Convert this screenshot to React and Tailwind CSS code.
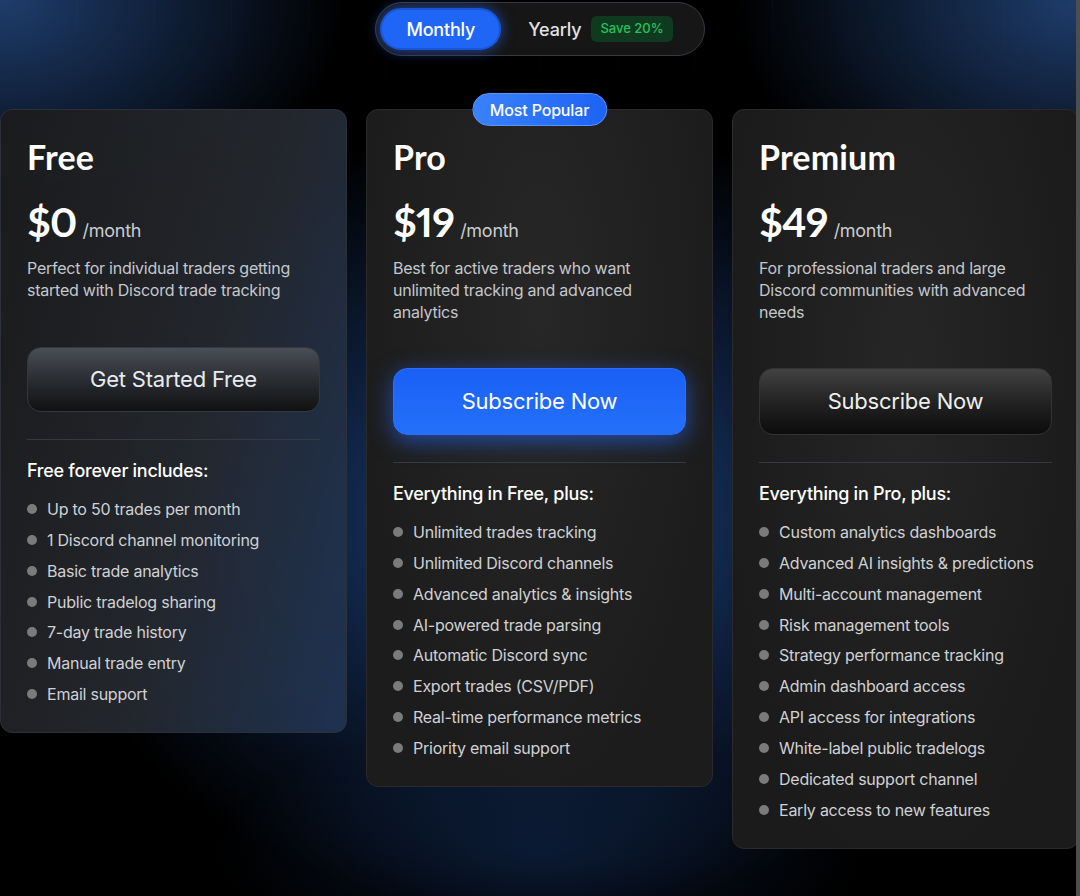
import { useState } from "react";

const plans = [
  {
    name: "Free",
    price: "$0",
    desc: "Perfect for individual traders getting started with Discord trade tracking",
    cta: "Get Started Free",
    heading: "Free forever includes:",
    variant: "free",
    features: [
      "Up to 50 trades per month",
      "1 Discord channel monitoring",
      "Basic trade analytics",
      "Public tradelog sharing",
      "7-day trade history",
      "Manual trade entry",
      "Email support",
    ],
  },
  {
    name: "Pro",
    price: "$19",
    desc: "Best for active traders who want unlimited tracking and advanced analytics",
    cta: "Subscribe Now",
    heading: "Everything in Free, plus:",
    variant: "pro",
    popular: true,
    features: [
      "Unlimited trades tracking",
      "Unlimited Discord channels",
      "Advanced analytics & insights",
      "AI-powered trade parsing",
      "Automatic Discord sync",
      "Export trades (CSV/PDF)",
      "Real-time performance metrics",
      "Priority email support",
    ],
  },
  {
    name: "Premium",
    price: "$49",
    desc: "For professional traders and large Discord communities with advanced needs",
    cta: "Subscribe Now",
    heading: "Everything in Pro, plus:",
    variant: "premium",
    features: [
      "Custom analytics dashboards",
      "Advanced AI insights & predictions",
      "Multi-account management",
      "Risk management tools",
      "Strategy performance tracking",
      "Admin dashboard access",
      "API access for integrations",
      "White-label public tradelogs",
      "Dedicated support channel",
      "Early access to new features",
    ],
  },
];

const cardStyles = {
  free: "border-[#2c3038] bg-[linear-gradient(105deg,rgba(27,27,28,0.97)_0%,rgba(37,40,46,0.94)_55%,rgba(31,52,84,0.92)_100%)]",
  pro: "border-[#2a2a2a] bg-[radial-gradient(ellipse_at_50%_30%,#272727_0%,#1c1c1c_75%)]",
  premium: "border-[#2a2a2a] bg-[radial-gradient(ellipse_at_50%_35%,#262626_0%,#1b1b1b_75%)]",
};

const buttonStyles = {
  free: "mt-[46px] h-[65px] border-[#33373e] bg-[linear-gradient(180deg,#4a4e56_0%,#2a2d32_50%,#101112_100%)] text-[#e8ebf0]",
  pro: "mt-[45px] h-[67px] border-[#2d6ff7] bg-[linear-gradient(180deg,#1a60f6_0%,#2470fa_100%)] text-white shadow-[0_6px_22px_rgba(37,99,235,0.65)]",
  premium: "mt-[45px] h-[67px] border-[#333] bg-[linear-gradient(180deg,#424242_0%,#232323_50%,#0c0c0c_100%)] text-[#eeeeee]",
};

const PlanCard = ({ plan }) => {
  return (
    <div
      className={`relative flex flex-col rounded-xl border px-[26px] pt-[27px] pb-[26px] ${cardStyles[plan.variant]}`}
    >
      {plan.popular && (
        <div className="absolute -top-[17px] left-1/2 -translate-x-1/2 rounded-full border border-[#5b95ff] bg-[linear-gradient(90deg,#3a82fa,#1d63f5)] px-[17px] h-[33px] flex items-center text-[16px] font-medium tracking-[-0.01em] text-white whitespace-nowrap">
          Most Popular
        </div>
      )}

      <h3 className="font-['Lato',sans-serif] text-[34px] leading-[40px] font-bold tracking-[0.005em] text-white">
        {plan.name}
      </h3>

      <div className="mt-[21px] flex items-baseline gap-[6px]">
        <span className="font-['Lato',sans-serif] text-[41px] leading-[48px] font-bold proportional-nums tracking-[-0.02em] text-white">
          {plan.price}
        </span>
        <span className="text-[18px] tracking-[-0.015em] text-[#c9ccd1]">/month</span>
      </div>

      <p className="mt-[11px] text-[16px] leading-[22px] tracking-[-0.015em] text-[#c4c7cc]">
        {plan.desc}
      </p>

      <button
        className={`w-full rounded-[14px] border text-[22px] tracking-[-0.01em] ${buttonStyles[plan.variant]}`}
      >
        {plan.cta}
      </button>

      <div className="mt-[27px] border-t border-[#363a40]" />

      <h4 className="mt-[18px] text-[18px] leading-[26px] font-medium tracking-[-0.015em] text-white">
        {plan.heading}
      </h4>

      <ul className="mt-[13px] flex flex-col gap-[6.85px]">
        {plan.features.map((f) => (
          <li
            key={f}
            className="flex items-center gap-[10px] text-[16px] leading-[24px] tracking-[-0.015em] text-[#cfd1d4]"
          >
            <span className="h-[10px] w-[10px] shrink-0 rounded-full bg-[#7b7b7b]" />
            {f}
          </li>
        ))}
      </ul>
    </div>
  );
};

const App = () => {
  const [billing, setBilling] = useState("monthly");

  return (
    <div className="relative h-[896px] w-full overflow-hidden bg-black font-['Inter',sans-serif]">
      {/* background glows */}
      <div className="absolute inset-0 bg-[radial-gradient(ellipse_46%_44%_at_50%_58%,rgba(30,70,132,0.95)_0%,rgba(22,50,96,0.6)_50%,transparent_100%),radial-gradient(ellipse_30%_14%_at_50%_95%,rgba(18,45,90,0.45)_0%,transparent_100%),radial-gradient(ellipse_32%_26%_at_0%_0%,rgba(32,64,114,0.95)_0%,transparent_100%),radial-gradient(ellipse_32%_26%_at_100%_0%,rgba(32,64,114,0.95)_0%,transparent_100%)]" />
      <div className="absolute inset-x-0 top-0 h-[100px] bg-[linear-gradient(to_right,rgba(255,255,255,0.025)_1px,transparent_1px)] bg-[size:77.3px_100%] bg-[position:-1px_0] [mask-image:linear-gradient(to_bottom,black,transparent)]" />

      <div className="relative flex flex-col items-center">
        {/* billing toggle */}
        <div className="mt-[2px] flex h-[54px] items-center rounded-full border border-[#353a42] bg-[#161616] p-[4px]">
          <button
            onClick={() => setBilling("monthly")}
            className={`h-[42px] w-[121px] rounded-full text-[18px] font-medium tracking-[-0.01em] ${
              billing === "monthly"
                ? "border-2 border-[#1a55d8] bg-[#2066f6] text-white shadow-[0_0_14px_rgba(37,99,235,0.7)]"
                : "text-[#e2e2e2]"
            }`}
          >
            Monthly
          </button>
          <div className="ml-[27px] flex items-center gap-[10px] pr-[27px]">
            <button
              onClick={() => setBilling("yearly")}
              className="text-[18px] font-medium tracking-[-0.01em] text-[#e2e2e2]"
            >
              Yearly
            </button>
            <span className="flex h-[26px] items-center rounded-md bg-[#0f3a1f] px-[9px] text-[13px] font-medium text-[#25c25a]">
              Save 20%
            </span>
          </div>
        </div>

        {/* plans */}
        <div className="mt-[53px] grid w-full grid-cols-[347px_347px_347px] items-start gap-[19px]">
          {plans.map((p) => (
            <PlanCard key={p.name} plan={p} />
          ))}
        </div>
      </div>

      {/* scrollbar */}
      <div className="absolute right-0 top-0 h-full w-[4px] bg-[#4e4e4e]" />
    </div>
  );
};

export default App;
